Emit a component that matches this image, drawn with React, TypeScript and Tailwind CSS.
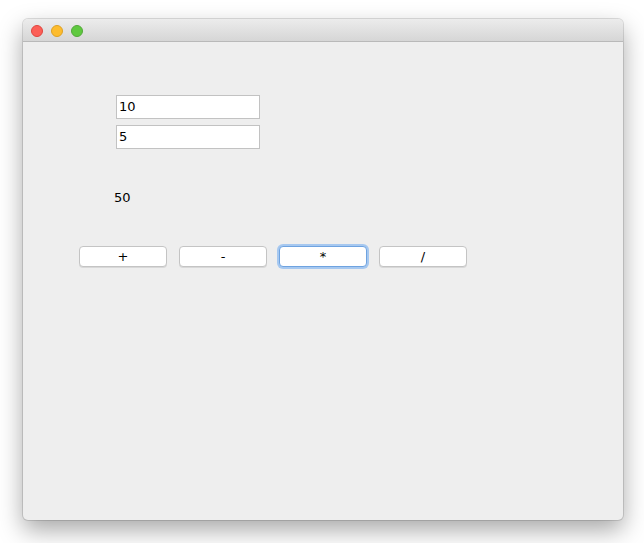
import React from 'react';

const font = { fontFamily: '"Lucida Grande", "DejaVu Sans", "Liberation Sans", sans-serif' };

const OpButton: React.FC<{ label: string; focused?: boolean }> = ({ label, focused }) => (
  <button
    className={
      focused
        ? 'w-[88px] h-[21px] rounded-[4px] bg-white border border-[#6fa3e0] shadow-[0_0_0_2px_#a6c8f0] text-[13px] text-black leading-none'
        : 'w-[88px] h-[21px] rounded-[4px] bg-white border border-[#c4c4c4] shadow-[0_1px_0_#d8d8d8] text-[13px] text-black leading-none'
    }
  >
    {label}
  </button>
);

export default function App() {
  return (
    <div className="w-[644px] h-[543px] bg-white pt-[19px] pl-[23px]" style={font}>
      <div className="w-[600px] h-[501px] rounded-[5px] bg-[#eeeeee] flex flex-col overflow-hidden shadow-[0_10px_24px_rgba(0,0,0,0.35),0_0_0_1px_rgba(0,0,0,0.12)]">
        {/* title bar */}
        <div className="h-[23px] shrink-0 bg-gradient-to-b from-[#ececec] to-[#d6d6d6] border-b border-[#b9b9b9] flex items-center gap-[8px] pl-[8px] pt-[1px]">
          <span className="w-[12px] h-[12px] rounded-full bg-[#fc5f57] border border-[#e0443e]" />
          <span className="w-[12px] h-[12px] rounded-full bg-[#fdbc2e] border border-[#dea123]" />
          <span className="w-[12px] h-[12px] rounded-full bg-[#5fc93f] border border-[#53a83a]" />
        </div>

        {/* content */}
        <div className="flex flex-col pt-[53px]">
          <div className="flex flex-col gap-[6px] pl-[93px]">
            <div className="w-[144px] h-[24px] bg-white border border-[#c2c2c2] flex items-center pl-[2px] text-[13px] text-black">10</div>
            <div className="w-[144px] h-[24px] bg-white border border-[#c2c2c2] flex items-center pl-[2px] text-[13px] text-black">5</div>
          </div>

          <div className="pl-[91px] mt-[41px] text-[13px] text-black leading-[16px]">50</div>

          <div className="flex gap-[12px] pl-[56px] mt-[40px]">
            <OpButton label="+" />
            <OpButton label="-" />
            <OpButton label="*" focused />
            <OpButton label="/" />
          </div>
        </div>
      </div>
    </div>
  );
}
